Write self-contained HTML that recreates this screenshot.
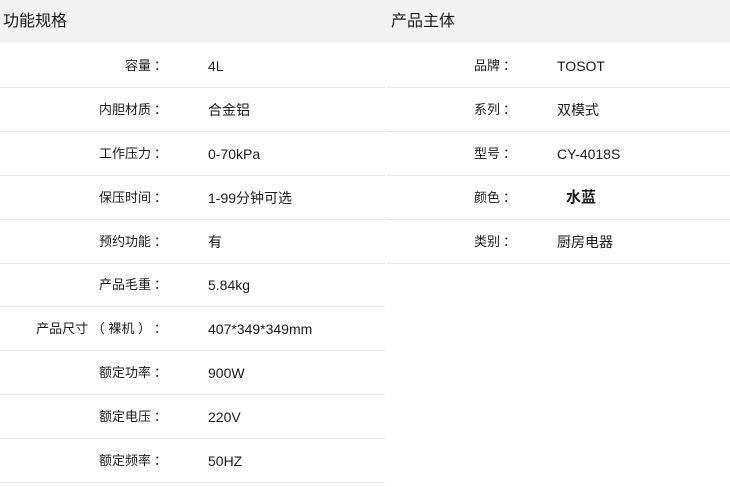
<!DOCTYPE html>
<html><head><meta charset="utf-8"><style>
body{margin:0;width:730px;height:487px;background:#fff;font-family:"Liberation Sans","Noto Sans CJK SC",sans-serif;color:#1a1a1a;position:relative;overflow:hidden}
.hd{position:absolute;top:0;height:43px;background:#f2f2f2;font-size:16px;line-height:43px}
.row{position:absolute;height:43px;border-bottom:1.5px solid #e6e6e6;font-size:13px;line-height:44px}
.l{position:absolute;text-align:right}
.c{position:absolute}
.v{position:absolute;font-size:14px}
</style></head><body>
<div class="hd" style="left:0;width:386px;padding-left:3px;box-sizing:border-box">功能规格</div>
<div class="hd" style="left:386px;width:344px;padding-left:5px;box-sizing:border-box">产品主体</div>
<div class="row" style="top:44px;left:0;width:385px"><span class="l" style="right:234px">容量</span><span class="c" style="left:154px">：</span><span class="v" style="left:208px">4L</span></div>
<div class="row" style="top:88px;left:0;width:385px"><span class="l" style="right:234px">内胆材质</span><span class="c" style="left:154px">：</span><span class="v" style="left:208px">合金铝</span></div>
<div class="row" style="top:132px;left:0;width:385px"><span class="l" style="right:234px">工作压力</span><span class="c" style="left:154px">：</span><span class="v" style="left:208px">0-70kPa</span></div>
<div class="row" style="top:176px;left:0;width:385px"><span class="l" style="right:234px">保压时间</span><span class="c" style="left:154px">：</span><span class="v" style="left:208px">1-99分钟可选</span></div>
<div class="row" style="top:220px;left:0;width:385px"><span class="l" style="right:234px">预约功能</span><span class="c" style="left:154px">：</span><span class="v" style="left:208px">有</span></div>
<div class="row" style="top:263px;left:0;width:385px"><span class="l" style="right:234px">产品毛重</span><span class="c" style="left:154px">：</span><span class="v" style="left:208px">5.84kg</span></div>
<div class="row" style="top:307px;left:0;width:385px"><span class="l" style="right:234px">产品尺寸 （ 裸机 ）</span><span class="c" style="left:154px">：</span><span class="v" style="left:208px">407*349*349mm</span></div>
<div class="row" style="top:351px;left:0;width:385px"><span class="l" style="right:234px">额定功率</span><span class="c" style="left:154px">：</span><span class="v" style="left:208px">900W</span></div>
<div class="row" style="top:395px;left:0;width:385px"><span class="l" style="right:234px">额定电压</span><span class="c" style="left:154px">：</span><span class="v" style="left:208px">220V</span></div>
<div class="row" style="top:439px;left:0;width:385px"><span class="l" style="right:234px">额定频率</span><span class="c" style="left:154px">：</span><span class="v" style="left:208px">50HZ</span></div>
<div class="row" style="top:44px;left:387px;width:343px"><span class="l" style="right:230px">品牌</span><span class="c" style="left:116px">：</span><span class="v" style="left:170px">TOSOT</span></div>
<div class="row" style="top:88px;left:387px;width:343px"><span class="l" style="right:230px">系列</span><span class="c" style="left:116px">：</span><span class="v" style="left:170px">双模式</span></div>
<div class="row" style="top:132px;left:387px;width:343px"><span class="l" style="right:230px">型号</span><span class="c" style="left:116px">：</span><span class="v" style="left:170px">CY-4018S</span></div>
<div class="row" style="top:176px;left:387px;width:343px"><span class="l" style="right:230px">颜色</span><span class="c" style="left:116px">：</span><span class="v" style="left:179px;font-size:15px;font-weight:bold">水蓝</span></div>
<div class="row" style="top:220px;left:387px;width:343px"><span class="l" style="right:230px">类别</span><span class="c" style="left:116px">：</span><span class="v" style="left:170px">厨房电器</span></div>
</body></html>
